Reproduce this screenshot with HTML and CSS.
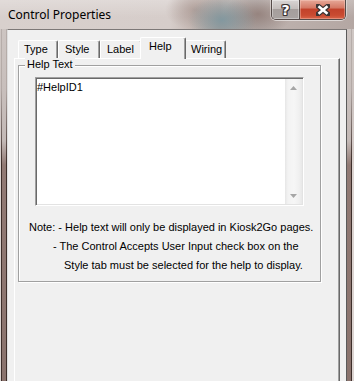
FILE: index.html
```html
<!DOCTYPE html>
<html>
<head>
<meta charset="utf-8">
<title>Control Properties</title>
<link rel="stylesheet" href="styles.css">
</head>
<body>
<div class="window">
  <div class="titlebar">
    <div class="title">Control Properties</div>
    <div class="caption-buttons">
      <div class="cap-btn cap-help"><span class="cap-q">?</span></div>
      <div class="cap-btn cap-close">
        <svg width="14" height="12" viewBox="0 0 14 12">
          <path d="M2 2 L12 10 M12 2 L2 10" stroke="#3c3434" stroke-width="5" stroke-linecap="round" fill="none"/>
          <path d="M2.5 2.3 L11.5 9.7 M11.5 2.3 L2.5 9.7" stroke="#ffffff" stroke-width="2.6" stroke-linecap="butt" fill="none"/>
        </svg>
      </div>
    </div>
  </div>
  <div class="frame-body">
    <div class="frame-side frame-left"></div>
    <div class="client">
      <div class="tabs">
        <div class="tab tab-type">Type</div>
        <div class="tab">Style</div>
        <div class="tab">Label</div>
        <div class="tab tab-active">Help</div>
        <div class="tab">Wiring</div>
      </div>
      <div class="tab-panel">
        <div class="group">
          <div class="group-label">Help Text</div>
          <div class="textbox">
            <div class="textbox-text">#HelpID1</div>
            <div class="vscroll">
              <div class="vs-btn">
                <svg width="7" height="4" viewBox="0 0 7 4"><path d="M3.5 0 L7 4 L0 4 Z" fill="#a6a6a6"/></svg>
              </div>
              <div class="vs-track"></div>
              <div class="vs-btn">
                <svg width="7" height="4" viewBox="0 0 7 4"><path d="M0 0 L7 0 L3.5 4 Z" fill="#a6a6a6"/></svg>
              </div>
            </div>
          </div>
          <div class="note">
            <div class="note-line note-l1">Note: - Help text will only be displayed in Kiosk2Go pages.</div>
            <div class="note-line note-l2">- The Control Accepts User Input check box on the</div>
            <div class="note-line note-l3">Style tab must be selected for the help to display.</div>
          </div>
        </div>
      </div>
    </div>
    <div class="frame-side frame-right"></div>
  </div>
</div>
</body>
</html>
```

FILE: styles.css
```css
* { box-sizing: border-box; margin: 0; padding: 0; }
html, body { width: 354px; height: 381px; overflow: hidden; }
body {
  font-family: "Liberation Sans", Arial, sans-serif;
  font-size: 11px;
  color: #000;
  background: #8a736d;
}
.window {
  width: 354px;
  height: 381px;
  display: flex;
  flex-direction: column;
  background: #cfc7c4;
}

/* title bar */
.titlebar {
  height: 29px;
  flex: none;
  display: flex;
  align-items: flex-start;
  background:
    radial-gradient(ellipse 34px 24px at 222px 20px, rgba(120,150,160,0.8), rgba(120,150,160,0) 100%),
    radial-gradient(ellipse 34px 22px at 258px 14px, rgba(140,118,112,0.75), rgba(140,118,112,0) 100%),
    radial-gradient(ellipse 30px 20px at 195px 10px, rgba(160,140,134,0.6), rgba(160,140,134,0) 100%),
    linear-gradient(to bottom, rgba(255,255,255,0.25), rgba(255,255,255,0) 60%),
    linear-gradient(to right, #d8d0cd 0%, #d6cdca 48%, #c4b7b2 55%, #ad9f9a 62%, #b1aaa8 72%, #bcb0ac 80%, #b4a7a3 100%);
}
.title {
  margin-left: 8px;
  line-height: 29px;
  font-family: "Noto Sans", "Open Sans", sans-serif;
  font-size: 12px;
  color: #000;
}
.caption-buttons {
  margin-left: auto;
  margin-right: 8px;
  display: flex;
  height: 20px;
  border: 1px solid #554b49;
  border-top: none;
  border-radius: 0 0 5px 5px;
  overflow: hidden;
  box-shadow: 0 1px 0 rgba(255,255,255,0.55), -1px 0 0 rgba(255,255,255,0.4), 1px 0 0 rgba(255,255,255,0.4);
}
.cap-btn {
  height: 19px;
  display: flex;
  align-items: center;
  justify-content: center;
}
.cap-help {
  width: 28px;
  border-right: 1px solid #554b49;
  background: linear-gradient(to bottom, #d9d5d4 0%, #c4bebc 45%, #a59e9c 50%, #a9a3a1 100%);
  box-shadow: inset 0 0 0 1px rgba(255,255,255,0.35);
}
.cap-q {
  font-family: "DejaVu Sans", sans-serif;
  font-weight: bold;
  font-size: 14px;
  line-height: 14px;
  color: #fff;
  text-shadow: 1px 0 0 #3c3434, -1px 0 0 #3c3434, 0 1px 0 #3c3434, 0 -1px 0 #3c3434,
               1px 1px 0 #3c3434, -1px -1px 0 #3c3434, 1px -1px 0 #3c3434, -1px 1px 0 #3c3434;
}
.cap-close {
  width: 45px;
  background: linear-gradient(to bottom, #e6a898 0%, #d57a66 40%, #c2422b 50%, #c94b31 80%, #d8654a 100%);
  box-shadow: inset 0 0 0 1px rgba(255,220,210,0.35);
}

/* frame + client */
.frame-body {
  flex: 1;
  display: flex;
  min-height: 0;
}
.frame-side {
  width: 7px;
  flex: none;
  position: relative;
  background: linear-gradient(to bottom, #cdc5c2 0, #c3b9b6 112px, #917a74 136px, #8a736d 100%);
}
.frame-side::after {
  content: "";
  position: absolute;
  top: 0; left: 0; right: 0; bottom: 0;
  -webkit-mask-image: linear-gradient(to bottom, rgba(0,0,0,0.15) 60px, #000 136px);
  mask-image: linear-gradient(to bottom, rgba(0,0,0,0.15) 60px, #000 136px);
}
.frame-left::after {
  background: linear-gradient(to right, #dcd4d1 0 1px, #3d2e2a 1px 2px, transparent 2px 6px, #3d2e2a 6px 7px);
}
.frame-right::after {
  background: linear-gradient(to right, transparent 0 4px, #3d2e2a 4px 5px, #dcd4d1 5px 7px);
}
.client {
  flex: 1;
  min-width: 0;
  background: #f0f0f0;
  border-top: 1px solid #7d7877;
  border-left: 1px solid #dedede;
  border-right: 1px solid #5a5a5a;
  display: flex;
  flex-direction: column;
  padding: 0 6px;
}

/* tabs */
.tabs {
  height: 28px;
  flex: none;
  display: flex;
  align-items: flex-end;
  padding-left: 4px;
}
.tab {
  width: 42px;
  height: 18px;
  padding-left: 6px;
  line-height: 16px;
  white-space: nowrap;
  background: #f0f0f0;
  border-top: 1px solid #fff;
  border-left: 1px solid #fff;
  border-right: 1px solid #696969;
  box-shadow: inset -1px 0 0 #a0a0a0;
  border-radius: 2px 2px 0 0;
}
.tab-type { width: 40px; padding-left: 5px; }
.tab-active {
  position: relative;
  z-index: 2;
  width: 46px;
  height: 22px;
  margin: 0 -2px -1px -2px;
  padding-left: 8px;
}

.tab-panel {
  flex: 1;
  border-top: 1px solid #fff;
  border-left: 1px solid #fff;
  border-right: 1px solid #696969;
  box-shadow: inset -1px 0 0 #a0a0a0;
  padding: 6px 0 0 3px;
}

/* group box */
.group {
  position: relative;
  width: 303px;
  height: 217px;
  border: 1px solid #a0a0a0;
  box-shadow: inset 1px 1px 0 #fff, 1px 1px 0 #fff;
}
.group-label {
  position: absolute;
  top: -8px;
  left: 6px;
  padding: 0 2px;
  line-height: 13px;
  background: #f0f0f0;
}

/* text box */
.textbox {
  margin: 11px 0 0 16px;
  width: 269px;
  height: 129px;
  display: flex;
  background: #fff;
  border: 1px solid;
  border-color: #a0a0a0 #fff #fff #a0a0a0;
  box-shadow: inset 1px 1px 0 #696969, inset -1px -1px 0 #e3e3e3;
  padding: 1px;
}
.textbox-text {
  flex: 1;
  padding: 2px 0 0 0;
  line-height: 13px;
}
.vscroll {
  width: 17px;
  flex: none;
  display: flex;
  flex-direction: column;
  background: linear-gradient(to right, #e6e6e6 0, #f3f3f3 3px, #f6f6f6 9px, #f0f0f0 14px, #e8e8e8 17px);
}
.vs-btn {
  height: 17px;
  flex: none;
  display: flex;
  align-items: center;
  justify-content: center;
}
.vs-track { flex: 1; }

/* note */
.note {
  margin-top: 12px;
}
.note-line {
  line-height: 19px;
  white-space: nowrap;
}
.note-l1 { margin-left: 10px; }
.note-l2 { margin-left: 34px; }
.note-l3 { margin-left: 45px; }
```
